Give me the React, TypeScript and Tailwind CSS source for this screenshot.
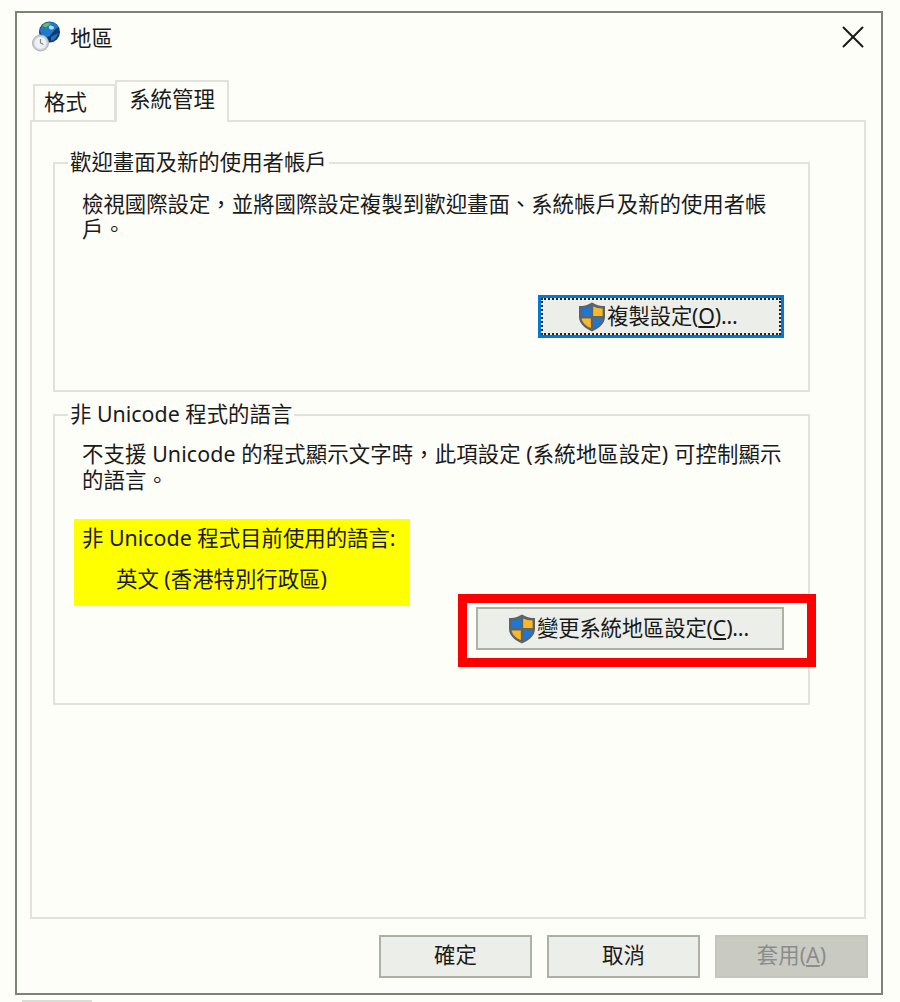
import React from 'react';
import { X } from 'lucide-react';

const Shield = () => (
  <svg width="28" height="30" viewBox="0 0 28 30" className="shrink-0">
    <path d="M14 0.5 L18 2.5 C20.5 3.5 23.5 4 27 4 L27 15 C27 22 20.5 26.5 14 29.5 C7.5 26.5 1 22 1 15 L1 4 C4.5 4 7.5 3.5 10 2.5 Z" fill="#5d6468" />
    <path d="M12.8 4.5 C10 5.8 7 6.3 3.4 6.5 L3.4 14 L12.8 14 Z" fill="#1c78d4" />
    <path d="M15.2 4.5 C18 5.8 21 6.3 24.6 6.5 L24.6 14 L15.2 14 Z" fill="#fdb924" />
    <path d="M3.5 16.4 L12.8 16.4 L12.8 26 C8.2 24 4.4 20.8 3.5 16.4 Z" fill="#fdb924" />
    <path d="M24.5 16.4 L15.2 16.4 L15.2 26 C19.8 24 23.6 20.8 24.5 16.4 Z" fill="#1c78d4" />
  </svg>
);

// globe with the small clock in front of it
const RegionIcon = () => (
  <svg width="28" height="31" viewBox="0 0 28 31" className="shrink-0">
    <circle cx="17.5" cy="11" r="10.5" fill="#10396f" />
    <path d="M8 9 C9 4 13 1 18 1 C22 1 25 3 26.5 6 C24 7 23 9 21 11 C19 13 18 16 15 16 C12 16 8 13 8 9 Z" fill="#1f78c8" />
    <path d="M11 4 C13 2 16 1.5 18 2 C18 4 15 6 13 6 C12 6 11 5 11 4 Z" fill="#6cc04a" />
    <path d="M17 5 C19 4 22 5 22 7 C21 9 18 9 17 7 Z" fill="#a8ddf5" />
    <path d="M19 16 C21 15 24 13 26 12 C25 16 23 19 19 20 Z" fill="#2a6fb5" />
    <circle cx="8.5" cy="22" r="8" fill="#c9d2d6" stroke="#aab4b9" strokeWidth="1" />
    <circle cx="8.5" cy="22" r="6" fill="#eef2f3" />
    <path d="M8.5 18 L8.5 22 L11.5 23.5" fill="none" stroke="#7d8a91" strokeWidth="1.2" />
  </svg>
);

const Group: React.FC<{ title: string; className: string; children: React.ReactNode }> = ({ title, className, children }) => (
  <div className={`relative border-2 border-[#e1e3db] ${className}`}>
    <div className="absolute left-[13px] top-[-15px] bg-[#fefef9] px-[2px] leading-[26px]">{title}</div>
    {children}
  </div>
);

const Btn: React.FC<{ children: React.ReactNode; disabled?: boolean }> = ({ children, disabled }) => (
  <div
    className={`flex h-[43px] w-[153px] items-center justify-center border-2 pb-[2px] ${
      disabled ? 'border-[#c4c6bd] bg-[#c9cbc2] text-[#8b8d8c]' : 'border-[#adb0a5] bg-[#ecefe9]'
    }`}
  >
    {children}
  </div>
);

export default function App() {
  return (
    <div
      className="h-[1002px] w-[900px] overflow-hidden bg-[#fefef9] text-[21.4px] text-[#1a1a1a]"
      style={{ fontFamily: '"Noto Sans", "Noto Sans CJK TC", sans-serif' }}
    >
      <div className="ml-[15px] mt-[11px] flex h-[984px] w-[868px] flex-col border-2 border-[#7d8277] px-[13px]">
        {/* title bar */}
        <div className="flex h-[67px] shrink-0 items-start">
          <div className="ml-[2px] mt-[8px]">
            <RegionIcon />
          </div>
          <div className="ml-[10px] mt-[12px] leading-[26px]">地區</div>
          <X className="ml-auto mr-[-4px] mt-[5px]" size={38} strokeWidth={1.25} color="#1a1a1a" />
        </div>

        {/* tabs */}
        <div className="relative z-10 mb-[-2px] ml-[3px] flex h-[42px] shrink-0 items-end">
          <div className="flex h-[38px] w-[83px] items-center border-2 border-b-0 border-[#e1e3db] pb-[3px] pl-[9px]">格式</div>
          <div className="ml-[-1px] flex h-[42px] w-[114px] items-center justify-center border-2 border-b-0 border-[#e1e3db] bg-[#fefef9] pb-[6px]">
            系統管理
          </div>
        </div>

        {/* tab page */}
        <div className="h-[799px] w-[836px] shrink-0 border-2 border-[#e1e3db] pl-[21px] pt-[40px]">
          <Group title="歡迎畫面及新的使用者帳戶" className="h-[230px] w-[757px]">
            <p className="ml-[27px] mt-[27px] w-[700px] leading-[25px]">
              檢視國際設定，並將國際設定複製到歡迎畫面、系統帳戶及新的使用者帳戶。
            </p>
            <div className="mr-[24px] mt-[54px] flex justify-end">
              <div className="h-[43px] w-[246px] border-[3px] border-[#0078d7] bg-[#ecefe9]">
                <div className="flex h-full items-center justify-center border-2 border-dotted border-[#222] pr-[6px]">
                  <Shield />
                  <span className="ml-[1px] tracking-[-0.2px]">
                    複製設定(<span className="underline">O</span>)...
                  </span>
                </div>
              </div>
            </div>
          </Group>

          <Group title="非 Unicode 程式的語言" className="mt-[22px] h-[291px] w-[757px]">
            <p className="ml-[27px] mt-[25px] w-[715px] leading-[26px] tracking-[0.1px]">
              不支援 Unicode 的程式顯示文字時，此項設定 (系統地區設定) 可控制顯示的語言。
            </p>
            <div className="ml-[19px] mt-[26px] h-[87px] w-[336px] bg-[#ffff00] pl-[8px] pt-[6px] leading-[26px]">
              <div>非 Unicode 程式目前使用的語言:</div>
              <div className="ml-[34px] mt-[15px]">英文 (香港特別行政區)</div>
            </div>
            <div className="mr-[-8px] mt-[-12px] flex justify-end">
              <div className="border-[9px] border-[#ff0000] pb-[8px] pl-[9px] pr-[23px] pt-[4px]">
                <div className="flex h-[43px] w-[308px] items-center justify-center border-2 border-[#adb0a5] bg-[#ecefe9] pr-[3px]">
                  <Shield />
                  <span className="ml-[1px] tracking-[-0.2px]">
                    變更系統地區設定(<span className="underline">C</span>)...
                  </span>
                </div>
              </div>
            </div>
          </Group>
        </div>

        {/* dialog buttons */}
        <div className="mt-[16px] flex justify-end gap-[15px]">
          <Btn>確定</Btn>
          <Btn>取消</Btn>
          <Btn disabled>
            <span>
              套用(<span className="underline">A</span>)
            </span>
          </Btn>
        </div>
      </div>
      <div className="ml-[22px] mt-[5px] h-[2px] w-[70px] bg-[#dcdcd6]" />
    </div>
  );
}
